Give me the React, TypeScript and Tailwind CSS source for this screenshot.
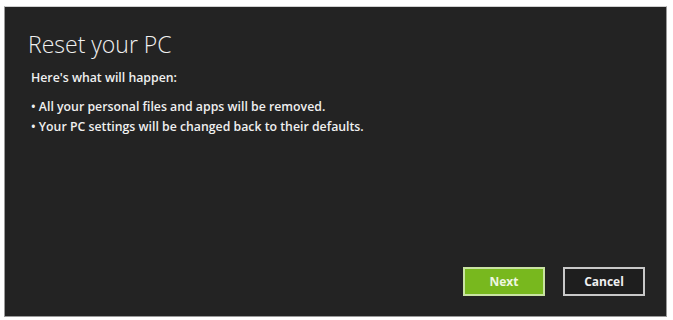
export default function App() {
  return (
    <div className="w-[673px] h-[320px] bg-white pt-[6px] pl-[4px]">
      <div
        className="w-[663px] h-[311px] bg-[#232323] border border-[#9a9a9a] border-t-[#d0d0d0] flex flex-col pl-[23px] pr-[21px] pt-[21px] pb-[20px] text-[#f0f0f0]"
        style={{ fontFamily: '"Open Sans", "Noto Sans", sans-serif' }}
      >
        <h1 className="text-[23px] leading-[32px] font-light">Reset your PC</h1>
        <p className="mt-[10px] ml-[3px] text-[12.3px] leading-[16px] font-semibold">Here's what will happen:</p>
        <ul className="mt-[11px] ml-[3px] text-[12.3px] leading-[20px] font-semibold">
          <li>• All your personal files and apps will be removed.</li>
          <li>• Your PC settings will be changed back to their defaults.</li>
        </ul>
        <div className="mt-auto flex justify-end gap-[18px]">
          <button className="w-[82px] h-[29px] bg-[#78b81e] border-2 border-[#c9e3a2] text-[#eef6e0] text-[12px] font-bold">
            Next
          </button>
          <button className="w-[82px] h-[29px] bg-[#1e1e1e] border-2 border-[#c8c8c8] text-[#f0f0f0] text-[12px] font-bold">
            Cancel
          </button>
        </div>
      </div>
    </div>
  );
}
